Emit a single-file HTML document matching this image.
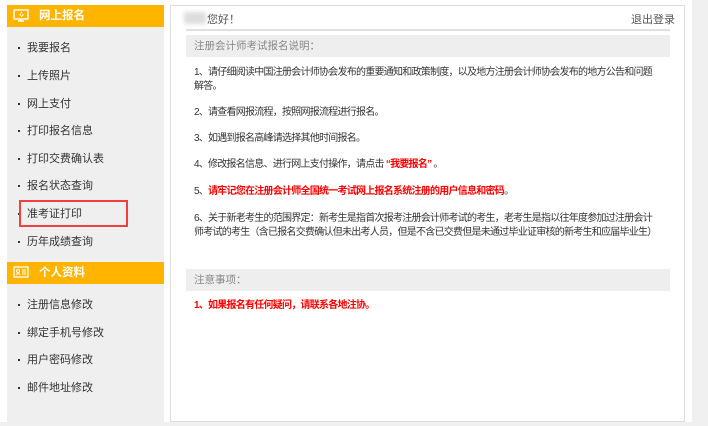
<!DOCTYPE html>
<html><head><meta charset="utf-8"><style>
*{margin:0;padding:0;box-sizing:border-box}
body{width:708px;height:426px;background:#fff;position:relative;overflow:hidden;font-family:"Liberation Sans","Noto Sans CJK SC",sans-serif;font-size:11px;color:#333}
.abs{position:absolute}
.side{left:7px;top:5px;width:157px;height:417px;background:#efefef}
.hd{position:absolute;left:7px;width:157px;height:22px;background:#ffb400;color:#fff;font-weight:bold;font-size:11.5px;line-height:22px;padding-left:32px}
.hd svg{position:absolute;left:6px;top:4px}
.it{position:absolute;left:27px;font-size:11px;color:#333;line-height:14px}
.it:before{content:"";position:absolute;left:-9px;top:6px;width:2px;height:2px;background:#333}
.main{left:170px;top:5px;width:515px;height:417px;border:1px solid #ddd;background:#fff}
.p{position:absolute;left:194px;width:490px;line-height:14px;font-size:10px;letter-spacing:-0.75px;white-space:nowrap}
.sec{position:absolute;left:186px;width:484px;height:22px;background:#eee;color:#888;line-height:22px;padding-left:8px;font-size:10.5px}
.red{color:#f00;font-weight:bold}
</style></head><body>
<div class="abs side"></div>
<div class="abs" style="left:692px;top:0;width:16px;height:426px;background:#f0f0f0"></div>
<div class="abs" style="left:0;top:422px;width:708px;height:4px;background:#f0f0f0"></div>
<div class="hd" style="top:5px"><svg width="16" height="13" viewBox="0 0 16 13"><rect x="1" y="1" width="14" height="9" fill="none" stroke="#fff" stroke-width="1.4"/><path d="M5 12h6M8 10v2" stroke="#fff" stroke-width="1.4"/><path d="M9 3l-2 3h3l-2 2" stroke="#fff" stroke-width="1"/></svg>网上报名</div>
<div class="it" style="top:41px">我要报名</div>
<div class="it" style="top:69px">上传照片</div>
<div class="it" style="top:97px">网上支付</div>
<div class="it" style="top:124px">打印报名信息</div>
<div class="it" style="top:152px">打印交费确认表</div>
<div class="it" style="top:179px">报名状态查询</div>
<div class="it" style="top:207px">准考证打印</div>
<div class="abs" style="left:19px;top:200px;width:109px;height:27px;border:2px solid #f04040"></div>
<div class="it" style="top:235px">历年成绩查询</div>
<div class="hd" style="top:262px"><svg width="16" height="12" viewBox="0 0 16 12"><rect x="1" y="1" width="14" height="10" fill="none" stroke="#fff" stroke-width="1.3"/><circle cx="5" cy="5" r="1.5" fill="none" stroke="#fff"/><path d="M3 9q2-3 4 0M9 4h4M9 6h4M9 8h4" stroke="#fff" fill="none"/></svg>个人资料</div>
<div class="it" style="top:298px">注册信息修改</div>
<div class="it" style="top:326px">绑定手机号修改</div>
<div class="it" style="top:353px">用户密码修改</div>
<div class="it" style="top:381px">邮件地址修改</div>

<div class="abs main"></div>
<div class="abs" style="left:184px;top:12px;width:22px;height:12px;background:#ddd;filter:blur(2px)"></div>
<div class="abs" style="left:207px;top:11px;color:#555">您好！</div>
<div class="abs" style="left:631px;top:11px;color:#555">退出登录</div>
<div class="abs" style="left:186px;top:29px;width:484px;height:2px;background:#e0e0e0"></div>
<div class="sec" style="top:35px">注册会计师考试报名说明：</div>
<div class="p" style="top:66px">1、请仔细阅读中国注册会计师协会发布的重要通知和政策制度，以及地方注册会计师协会发布的地方公告和问题<br>解答。</div>
<div class="p" style="top:106px">2、请查看网报流程，按照网报流程进行报名。</div>
<div class="p" style="top:132px">3、如遇到报名高峰请选择其他时间报名。</div>
<div class="p" style="top:158px">4、修改报名信息、进行网上支付操作，请点击 <span class="red">“我要报名”</span> 。</div>
<div class="p" style="top:185px">5、<span class="red">请牢记您在注册会计师全国统一考试网上报名系统注册的用户信息和密码</span>。</div>
<div class="p" style="top:212px">6、关于新老考生的范围界定：新考生是指首次报考注册会计师考试的考生，老考生是指以往年度参加过注册会计<br>师考试的考生（含已报名交费确认但未出考人员，但是不含已交费但是未通过毕业证审核的新考生和应届毕业生）</div>
<div class="sec" style="top:269px">注意事项：</div>
<div class="p red" style="top:299px">1、如果报名有任何疑问，请联系各地注协。</div>
</body></html>
